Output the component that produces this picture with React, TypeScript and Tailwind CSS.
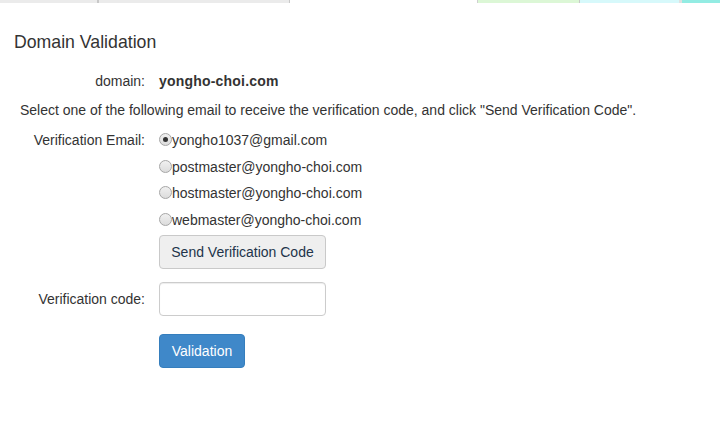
import React, { useState } from 'react';

const emails = [
    'yongho1037@gmail.com',
    'postmaster@yongho-choi.com',
    'hostmaster@yongho-choi.com',
    'webmaster@yongho-choi.com',
];

const Radio: React.FC<{ checked: boolean; onClick: () => void }> = ({ checked, onClick }) => (
    <span
        onClick={onClick}
        className="inline-flex h-[13px] w-[13px] items-center justify-center rounded-full border border-[#a6a6a6] bg-gradient-to-b from-[#f0f0f0] to-[#dcdcdc]"
    >
        {checked && <span className="h-[5px] w-[5px] rounded-full bg-[#333]" />}
    </span>
);

const App: React.FC = () => {
    const [selected, setSelected] = useState(0);
    const [code, setCode] = useState('');

    return (
        <div className="h-[422px] w-[720px] overflow-hidden bg-white font-['Liberation_Sans',Arial,sans-serif] text-[14px] text-[#333]">
            {/* top tab strip */}
            <div className="flex h-[3px]">
                <div className="w-[97px] bg-[#ebebeb]" />
                <div className="w-[2px] bg-[#c8c8c8]" />
                <div className="w-[190px] bg-[#ebebeb]" />
                <div className="w-[1px] bg-[#c8c8c8]" />
                <div className="w-[187px] bg-white" />
                <div className="w-[1px] bg-[#d0d0d0]" />
                <div className="w-[101px] bg-[#dcf7d6]" />
                <div className="w-[1px] bg-[#c8c8c8]" />
                <div className="w-[99px] bg-[#d7f9fb]" />
                <div className="w-[3px] bg-[#e0e0e0]" />
                <div className="flex-1 bg-[#93ece3]" />
            </div>

            <h4 className="ml-[14px] mt-[29px] text-[17.7px] leading-[20px]">Domain Validation</h4>

            <div className="mt-[19px] flex items-center">
                <div className="w-[145px] text-right">domain:</div>
                <div className="ml-[14px] font-bold tracking-[0.2px]">yongho-choi.com</div>
            </div>

            <p className="ml-[20px] mt-[8px] leading-[20px]">
                Select one of the following email to receive the verification code, and click "Send Verification Code".
            </p>

            <div className="mt-[10px] flex">
                <div className="w-[145px] text-right leading-[20px]">Verification Email:</div>
                <div className="ml-[14px] flex flex-col">
                    {emails.map((email, i) => (
                        <label key={email} className="flex h-[26.5px] items-start leading-[20px]">
                            <span className="mt-[3px] flex">
                                <Radio checked={selected === i} onClick={() => setSelected(i)} />
                            </span>
                            <span>{email}</span>
                        </label>
                    ))}
                    <button className="mt-[-1px] h-[34px] w-[167px] rounded-[4px] border border-[#c9c9c9] bg-[#efefef] text-[#22344a]">
                        Send Verification Code
                    </button>
                </div>
            </div>

            <div className="mt-[13px] flex items-center">
                <div className="w-[145px] text-right">Verification code:</div>
                <input
                    value={code}
                    onChange={e => setCode(e.target.value)}
                    className="ml-[14px] h-[34px] w-[167px] rounded-[4px] border border-[#ccc] px-3 shadow-[inset_0_1px_1px_rgba(0,0,0,0.075)] outline-none"
                />
            </div>

            <button className="ml-[159px] mt-[18px] h-[34px] w-[86px] rounded-[4px] border border-[#357ebd] bg-[#3f88c9] text-white">
                Validation
            </button>
        </div>
    );
};

export default App;
